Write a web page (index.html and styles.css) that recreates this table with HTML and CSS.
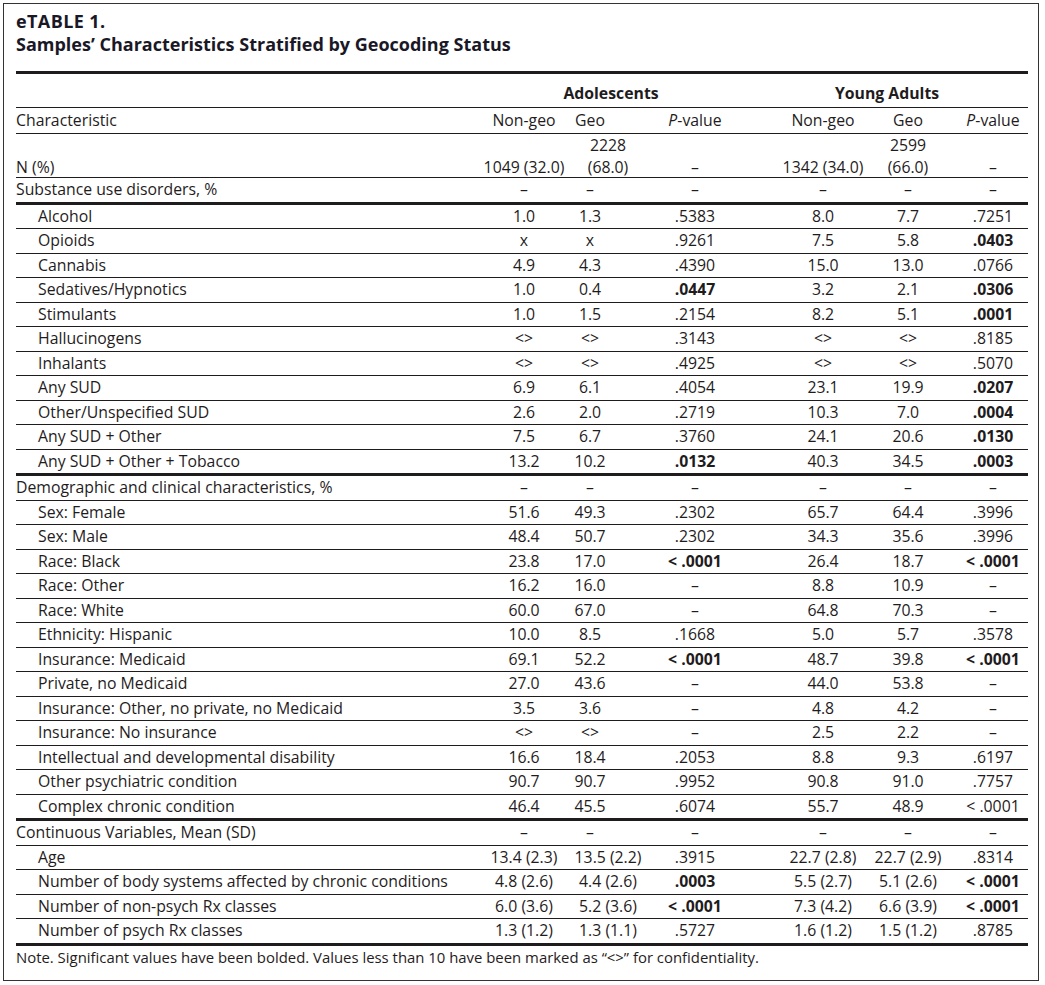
FILE: index.html
```html
<!DOCTYPE html>
<html lang="en">
<head>
<meta charset="utf-8">
<title>eTable 1</title>
<link rel="stylesheet" href="styles.css">
</head>
<body>
<div class="frame">
  <header class="title">
    <div class="label">eTABLE 1.</div>
    <h1 class="heading">Samples’ Characteristics Stratified by Geocoding Status</h1>
  </header>

  <div class="table">
    <div class="row group">
      <div class="c"></div>
      <div class="c span-a">Adolescents</div>
      <div class="c span-y">Young Adults</div>
    </div>
    <div class="row colhead">
      <div class="c lbl">Characteristic</div>
      <div class="c">Non-geo</div><div class="c">Geo</div><div class="c"><span><i>P</i>-value</span></div>
      <div class="c">Non-geo</div><div class="c">Geo</div><div class="c pcol"><span><i>P</i>-value</span></div>
    </div>
    <div class="row nrow">
      <div class="c lbl">N (%)</div>
      <div class="c">1049 (32.0)</div><div class="c w stack"><span>2228</span><span>(68.0)</span></div><div class="c">–</div>
      <div class="c">1342 (34.0)</div><div class="c stack"><span>2599</span><span>(66.0)</span></div><div class="c pcol">–</div>
    </div>
    <div class="row section thick">
      <div class="c lbl">Substance use disorders, %</div>
      <div class="c">–</div><div class="c">–</div><div class="c">–</div><div class="c">–</div><div class="c">–</div><div class="c pcol">–</div>
    </div>

    <div class="row"><div class="c lbl sub">Alcohol</div><div class="c">1.0</div><div class="c">1.3</div><div class="c">.5383</div><div class="c">8.0</div><div class="c">7.7</div><div class="c pcol">.7251</div></div>
    <div class="row"><div class="c lbl sub">Opioids</div><div class="c">x</div><div class="c">x</div><div class="c">.9261</div><div class="c">7.5</div><div class="c">5.8</div><div class="c pcol b">.0403</div></div>
    <div class="row"><div class="c lbl sub">Cannabis</div><div class="c">4.9</div><div class="c">4.3</div><div class="c">.4390</div><div class="c">15.0</div><div class="c">13.0</div><div class="c pcol">.0766</div></div>
    <div class="row"><div class="c lbl sub">Sedatives/Hypnotics</div><div class="c">1.0</div><div class="c">0.4</div><div class="c b">.0447</div><div class="c">3.2</div><div class="c">2.1</div><div class="c pcol b">.0306</div></div>
    <div class="row"><div class="c lbl sub">Stimulants</div><div class="c">1.0</div><div class="c">1.5</div><div class="c">.2154</div><div class="c">8.2</div><div class="c">5.1</div><div class="c pcol b">.0001</div></div>
    <div class="row"><div class="c lbl sub">Hallucinogens</div><div class="c">&lt;&gt;</div><div class="c">&lt;&gt;</div><div class="c">.3143</div><div class="c">&lt;&gt;</div><div class="c">&lt;&gt;</div><div class="c pcol">.8185</div></div>
    <div class="row"><div class="c lbl sub">Inhalants</div><div class="c">&lt;&gt;</div><div class="c">&lt;&gt;</div><div class="c">.4925</div><div class="c">&lt;&gt;</div><div class="c">&lt;&gt;</div><div class="c pcol">.5070</div></div>
    <div class="row"><div class="c lbl sub">Any SUD</div><div class="c">6.9</div><div class="c">6.1</div><div class="c">.4054</div><div class="c">23.1</div><div class="c">19.9</div><div class="c pcol b">.0207</div></div>
    <div class="row"><div class="c lbl sub">Other/Unspecified SUD</div><div class="c">2.6</div><div class="c">2.0</div><div class="c">.2719</div><div class="c">10.3</div><div class="c">7.0</div><div class="c pcol b">.0004</div></div>
    <div class="row"><div class="c lbl sub">Any SUD + Other</div><div class="c">7.5</div><div class="c">6.7</div><div class="c">.3760</div><div class="c">24.1</div><div class="c">20.6</div><div class="c pcol b">.0130</div></div>
    <div class="row thick"><div class="c lbl sub">Any SUD + Other + Tobacco</div><div class="c">13.2</div><div class="c">10.2</div><div class="c b">.0132</div><div class="c">40.3</div><div class="c">34.5</div><div class="c pcol b">.0003</div></div>

    <div class="row section">
      <div class="c lbl">Demographic and clinical characteristics, %</div>
      <div class="c">–</div><div class="c">–</div><div class="c">–</div><div class="c">–</div><div class="c">–</div><div class="c pcol">–</div>
    </div>
    <div class="row"><div class="c lbl sub">Sex: Female</div><div class="c">51.6</div><div class="c">49.3</div><div class="c">.2302</div><div class="c">65.7</div><div class="c">64.4</div><div class="c pcol">.3996</div></div>
    <div class="row"><div class="c lbl sub">Sex: Male</div><div class="c">48.4</div><div class="c">50.7</div><div class="c">.2302</div><div class="c">34.3</div><div class="c">35.6</div><div class="c pcol">.3996</div></div>
    <div class="row"><div class="c lbl sub">Race: Black</div><div class="c">23.8</div><div class="c">17.0</div><div class="c b">&lt; .0001</div><div class="c">26.4</div><div class="c">18.7</div><div class="c pcol b">&lt; .0001</div></div>
    <div class="row"><div class="c lbl sub">Race: Other</div><div class="c">16.2</div><div class="c">16.0</div><div class="c">–</div><div class="c">8.8</div><div class="c">10.9</div><div class="c pcol">–</div></div>
    <div class="row"><div class="c lbl sub">Race: White</div><div class="c">60.0</div><div class="c">67.0</div><div class="c">–</div><div class="c">64.8</div><div class="c">70.3</div><div class="c pcol">–</div></div>
    <div class="row"><div class="c lbl sub">Ethnicity: Hispanic</div><div class="c">10.0</div><div class="c">8.5</div><div class="c">.1668</div><div class="c">5.0</div><div class="c">5.7</div><div class="c pcol">.3578</div></div>
    <div class="row"><div class="c lbl sub">Insurance: Medicaid</div><div class="c">69.1</div><div class="c">52.2</div><div class="c b">&lt; .0001</div><div class="c">48.7</div><div class="c">39.8</div><div class="c pcol b">&lt; .0001</div></div>
    <div class="row"><div class="c lbl sub">Private, no Medicaid</div><div class="c">27.0</div><div class="c">43.6</div><div class="c">–</div><div class="c">44.0</div><div class="c">53.8</div><div class="c pcol">–</div></div>
    <div class="row"><div class="c lbl sub">Insurance: Other, no private, no Medicaid</div><div class="c">3.5</div><div class="c">3.6</div><div class="c">–</div><div class="c">4.8</div><div class="c">4.2</div><div class="c pcol">–</div></div>
    <div class="row"><div class="c lbl sub">Insurance: No insurance</div><div class="c">&lt;&gt;</div><div class="c">&lt;&gt;</div><div class="c">–</div><div class="c">2.5</div><div class="c">2.2</div><div class="c pcol">–</div></div>
    <div class="row"><div class="c lbl sub">Intellectual and developmental disability</div><div class="c">16.6</div><div class="c">18.4</div><div class="c">.2053</div><div class="c">8.8</div><div class="c">9.3</div><div class="c pcol">.6197</div></div>
    <div class="row"><div class="c lbl sub">Other psychiatric condition</div><div class="c">90.7</div><div class="c">90.7</div><div class="c">.9952</div><div class="c">90.8</div><div class="c">91.0</div><div class="c pcol">.7757</div></div>
    <div class="row thick"><div class="c lbl sub">Complex chronic condition</div><div class="c">46.4</div><div class="c">45.5</div><div class="c">.6074</div><div class="c">55.7</div><div class="c">48.9</div><div class="c pcol">&lt; .0001</div></div>

    <div class="row section">
      <div class="c lbl">Continuous Variables, Mean (SD)</div>
      <div class="c">–</div><div class="c">–</div><div class="c">–</div><div class="c">–</div><div class="c">–</div><div class="c pcol">–</div>
    </div>
    <div class="row"><div class="c lbl sub">Age</div><div class="c">13.4 (2.3)</div><div class="c w">13.5 (2.2)</div><div class="c">.3915</div><div class="c">22.7 (2.8)</div><div class="c">22.7 (2.9)</div><div class="c pcol">.8314</div></div>
    <div class="row"><div class="c lbl sub">Number of body systems affected by chronic conditions</div><div class="c">4.8 (2.6)</div><div class="c w">4.4 (2.6)</div><div class="c b">.0003</div><div class="c">5.5 (2.7)</div><div class="c">5.1 (2.6)</div><div class="c pcol b">&lt; .0001</div></div>
    <div class="row"><div class="c lbl sub">Number of non-psych Rx classes</div><div class="c">6.0 (3.6)</div><div class="c w">5.2 (3.6)</div><div class="c b">&lt; .0001</div><div class="c">7.3 (4.2)</div><div class="c">6.6 (3.9)</div><div class="c pcol b">&lt; .0001</div></div>
    <div class="row thick"><div class="c lbl sub">Number of psych Rx classes</div><div class="c">1.3 (1.2)</div><div class="c w">1.3 (1.1)</div><div class="c">.5727</div><div class="c">1.6 (1.2)</div><div class="c">1.5 (1.2)</div><div class="c pcol">.8785</div></div>
  </div>

  <p class="note">Note. Significant values have been bolded. Values less than 10 have been marked as “&lt;&gt;” for confidentiality.</p>
</div>
</body>
</html>
```

FILE: styles.css
```css
html, body {
  margin: 0;
  padding: 0;
  background: #ffffff;
}

body {
  font-family: "Open Sans", "Noto Sans", sans-serif;
  color: #1f1c1d;
}

.frame {
  margin: 3px 0 0 3px;
  width: 1036px;
  height: 978px;
  box-sizing: border-box;
  border: 1px solid #333333;
  padding: 6px 10px 0 12px;
}

.title {
  color: #1a1826;
}

.label {
  font-size: 18px;
  font-weight: 700;
  line-height: 22px;
  letter-spacing: 0.4px;
}

.heading {
  margin: 0;
  font-size: 18px;
  font-weight: 700;
  line-height: 24px;
}

.table {
  margin-top: 15px;
  border-top: 3px solid #1f1c1d;
  font-size: 15.8px;
}

.row {
  display: grid;
  grid-template-columns: 472px 72px 60px 150px 106px 64px 88px;
  align-items: center;
  height: 24.5px;
  box-sizing: border-box;
  border-bottom: 1px solid #1f1c1d;
}

.row.thick {
  border-bottom: 3px solid #1f1c1d;
  height: 26.5px;
}

.c {
  display: flex;
  justify-content: center;
  white-space: nowrap;
  line-height: 19px;
}

.c.lbl {
  justify-content: flex-start;
}

.c.sub {
  padding-left: 22px;
}

.c.pcol {
  padding-left: 18px;
}

.c.w {
  padding-left: 36px;
}

.c.b {
  font-weight: 700;
}

.group {
  height: 34px;
  align-items: end;
  padding-bottom: 4px;
  font-weight: 700;
}

.span-a {
  grid-column: 2 / 5;
  padding-right: 36px;
}

.span-y {
  grid-column: 5 / 8;
  padding-right: 24px;
}

.colhead {
  height: 26px;
}

.nrow {
  height: 44px;
  align-items: end;
  padding-bottom: 2px;
}

.c.stack {
  flex-direction: column;
  align-items: center;
  line-height: 22px;
  margin-bottom: -1.5px;
}

.note {
  margin: 1px 0 0 0;
  font-size: 14.9px;
  line-height: 20px;
}
```
